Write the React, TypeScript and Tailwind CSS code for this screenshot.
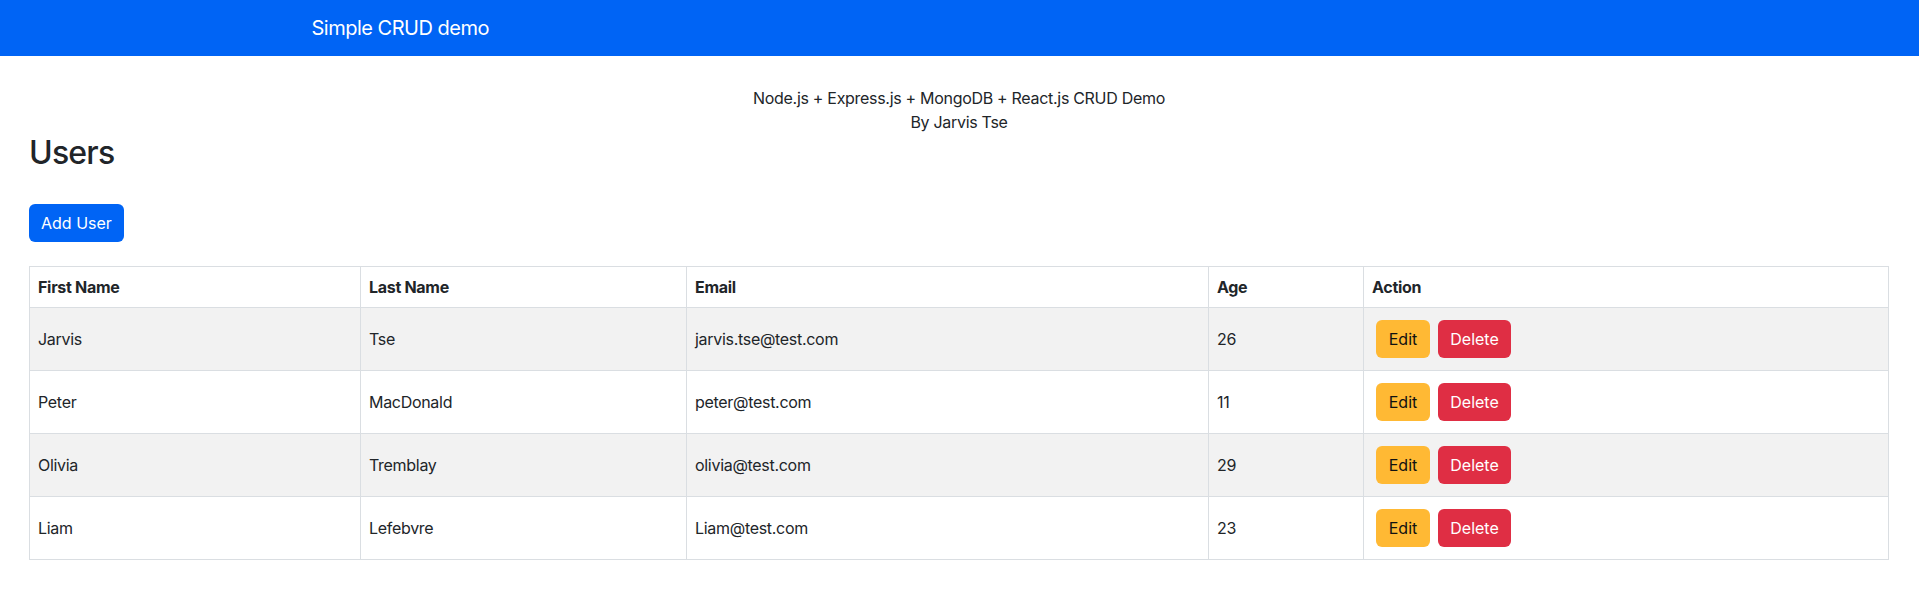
import React from "react";

const users = [
  { first: "Jarvis", last: "Tse", email: "jarvis.tse@test.com", age: 26 },
  { first: "Peter", last: "MacDonald", email: "peter@test.com", age: 11 },
  { first: "Olivia", last: "Tremblay", email: "olivia@test.com", age: 29 },
  { first: "Liam", last: "Lefebvre", email: "Liam@test.com", age: 23 },
];

export default function App() {
  return (
    <div
      className="min-h-screen bg-white text-[#212529] text-[16px] leading-6 tracking-[-0.3px]"
      style={{ fontFamily: "Inter, 'Noto Sans', sans-serif" }}
    >
      <nav className="h-[56px] bg-[#0064f5] flex items-center">
        <div className="w-[1320px] mx-auto px-3">
          <span className="text-white text-[20px] leading-[30px] tracking-[-0.5px]">Simple CRUD demo</span>
        </div>
      </nav>
      <div className="pl-[29px] pr-[30px] pt-[30px]">
        <div className="text-center">
          <div>Node.js + Express.js + MongoDB + React.js CRUD Demo</div>
          <div>By Jarvis Tse</div>
        </div>
        <h2 className="text-[32px] leading-[38px] font-medium tracking-[-0.8px] mb-[32px]">Users</h2>
        <div className="mb-6">
          <button className="h-[38px] px-3 rounded-[6px] bg-[#0064f5] text-white tracking-normal">Add User</button>
        </div>
        <table className="w-full table-fixed border border-[#dadee2]">
          <colgroup>
            <col className="w-[331px]" />
            <col className="w-[326px]" />
            <col className="w-[522px]" />
            <col className="w-[155px]" />
            <col />
          </colgroup>
          <thead>
            <tr className="h-[41px]">
              {["First Name", "Last Name", "Email", "Age", "Action"].map((h) => (
                <th key={h} className="border border-[#dadee2] px-2 py-2 text-left font-bold">
                  {h}
                </th>
              ))}
            </tr>
          </thead>
          <tbody>
            {users.map((u, i) => (
              <tr key={u.first} className={"h-[63px] " + (i % 2 === 0 ? "bg-[#f2f2f2]" : "bg-white")}>
                <td className="border border-[#dadee2] px-2 py-2 align-middle">{u.first}</td>
                <td className="border border-[#dadee2] px-2 py-2 align-middle">{u.last}</td>
                <td className="border border-[#dadee2] px-2 py-2 align-middle">{u.email}</td>
                <td className="border border-[#dadee2] px-2 py-2 align-middle">{u.age}</td>
                <td className="border border-[#dadee2] px-2 py-2 align-middle">
                  <div className="flex">
                    <button className="m-1 h-[38px] w-[54px] rounded-[6px] bg-[#ffb934] text-[#111] tracking-normal">Edit</button>
                    <button className="m-1 h-[38px] w-[73px] rounded-[6px] bg-[#df2e44] text-white tracking-normal">Delete</button>
                  </div>
                </td>
              </tr>
            ))}
          </tbody>
        </table>
      </div>
    </div>
  );
}
